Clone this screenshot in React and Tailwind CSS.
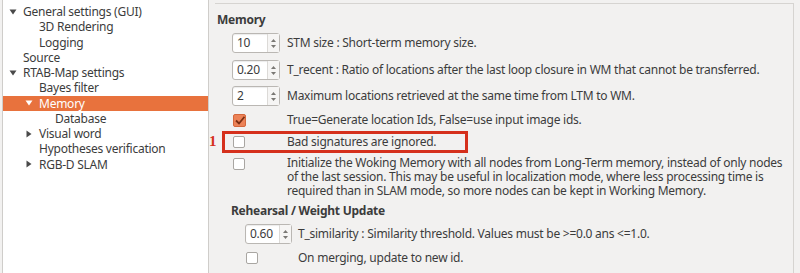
const tree = [
  { label: "General settings (GUI)", level: 0, arrow: "down" },
  { label: "3D Rendering", level: 1 },
  { label: "Logging", level: 1 },
  { label: "Source", level: 0 },
  { label: "RTAB-Map settings", level: 0, arrow: "down" },
  { label: "Bayes filter", level: 1 },
  { label: "Memory", level: 1, arrow: "down", selected: true },
  { label: "Database", level: 2 },
  { label: "Visual word", level: 1, arrow: "right" },
  { label: "Hypotheses verification", level: 1 },
  { label: "RGB-D SLAM", level: 1, arrow: "right" },
];

function Arrow({ dir, light }) {
  const color = light ? "#ffffff" : "#4a4a4a";
  return dir === "down" ? (
    <svg width="8" height="8" viewBox="0 0 8 8">
      <path d="M0.5 1.5 L7.5 1.5 L4 6.5 Z" fill={color} />
    </svg>
  ) : (
    <svg width="8" height="8" viewBox="0 0 8 8">
      <path d="M1.5 0.5 L6.5 4 L1.5 7.5 Z" fill={color} />
    </svg>
  );
}

function SpinBox({ value, width = "w-[48px]" }) {
  return (
    <div className={`${width} h-[20px] flex bg-white border border-[#bab7b3] rounded-[3px] shadow-[inset_0_1px_1px_rgba(0,0,0,0.08)]`}>
      <div className="flex-1 pl-[4px] leading-[18px]">{value}</div>
      <div className="w-[12px] flex flex-col items-center justify-center gap-[3px] border-l border-[#dcdad7] bg-[#f6f5f4]">
        <svg width="5" height="3" viewBox="0 0 5 3">
          <path d="M0 3 L2.5 0 L5 3 Z" fill="#7a7874" />
        </svg>
        <svg width="5" height="3" viewBox="0 0 5 3">
          <path d="M0 0 L2.5 3 L5 0 Z" fill="#7a7874" />
        </svg>
      </div>
    </div>
  );
}

function CheckBox({ checked }) {
  return checked ? (
    <div className="w-[13px] h-[13px] rounded-[2px] bg-[#ec8257] border border-[#d4673c] flex items-center justify-center">
      <svg width="10" height="9" viewBox="0 0 10 9">
        <path d="M1 4.5 L4 7.5 L9.5 0.8" stroke="#7a2e12" strokeWidth="1.8" fill="none" />
      </svg>
    </div>
  ) : (
    <div className="w-[12px] h-[12px] rounded-[2px] bg-white border border-[#a9a6a2]" />
  );
}

export default function App() {
  return (
    <div
      className="w-[800px] h-[273px] bg-[#f2f1f0] flex text-[12px] tracking-[-0.25px] text-[#3c3c3c] overflow-hidden relative"
      style={{ fontFamily: '"Noto Sans", "Open Sans", sans-serif' }}
    >
      {/* tree */}
      <div className="ml-[2px] w-[207px] h-full bg-white border-l border-r border-[#cfcdca] pt-[4px]">
        {tree.map((t) => (
          <div
            key={t.label}
            className={`h-[15.25px] flex items-center whitespace-nowrap ${t.selected ? "bg-[#e8723d] text-white" : ""}`}
          >
            <div
              className="flex items-center"
              style={{ paddingLeft: 6 + t.level * 16 }}
            >
              <div className="w-[14px] flex items-center">
                {t.arrow && <Arrow dir={t.arrow} light={t.selected} />}
              </div>
              <span className="leading-[13px]">{t.label}</span>
            </div>
          </div>
        ))}
      </div>

      {/* settings panel */}
      <div className="ml-[6px] mt-[3px] w-[579px] h-[280px] border-t border-r border-[#d6d4d1] pl-[2px]">
        <div className="font-bold leading-[16px] mt-[8px]">Memory</div>
        <div className="pl-[15px] whitespace-nowrap">
          <div className="flex items-center mt-[5px]">
            <div className="w-[55px]"><SpinBox value="10" /></div>
            <span>STM size : Short-term memory size.</span>
          </div>
          <div className="flex items-center mt-[7px]">
            <div className="w-[55px]"><SpinBox value="0.20" /></div>
            <span>T_recent : Ratio of locations after the last loop closure in WM that cannot be transferred.</span>
          </div>
          <div className="flex items-center mt-[6px]">
            <div className="w-[55px]"><SpinBox value="2" /></div>
            <span>Maximum locations retrieved at the same time from LTM to WM.</span>
          </div>
          <div className="flex items-center mt-[7px] h-[14px]">
            <div className="w-[55px] pl-[1px]"><CheckBox checked /></div>
            <span>True=Generate location Ids, False=use input image ids.</span>
          </div>
          <div className="flex items-center mt-[8px] h-[14px]">
            <div className="w-[55px] pl-[1px]"><CheckBox /></div>
            <span>Bad signatures are ignored.</span>
          </div>
          <div className="flex items-start mt-[7px]">
            <div className="w-[55px] pl-[1px] pt-[2px]"><CheckBox /></div>
            <span className="leading-[14px] w-[498px] whitespace-normal">
              Initialize the Woking Memory with all nodes from Long-Term memory, instead of only nodes of the last session. This may be useful in localization mode, where less processing time is required than in SLAM mode, so more nodes can be kept in Working Memory.
            </span>
          </div>
        </div>
        <div className="pl-[14px] whitespace-nowrap">
          <div className="font-bold leading-[16px] mt-[5px]">Rehearsal / Weight Update</div>
          <div className="pl-[14px]">
            <div className="flex items-center mt-[5px]">
              <div className="w-[53px]"><SpinBox value="0.60" width="w-[47px]" /></div>
              <span>T_similarity : Similarity threshold. Values must be &gt;=0.0 ans &lt;=1.0.</span>
            </div>
            <div className="flex items-center mt-[7px] h-[14px]">
              <div className="w-[53px] pl-[1px]"><CheckBox /></div>
              <span>On merging, update to new id.</span>
            </div>
          </div>
        </div>
      </div>

      {/* annotation */}
      <div className="absolute left-[222px] top-[131px] w-[246px] h-[22px] border-[3px] border-[#d5301c]" />
      <div
        className="absolute left-[209px] top-[132px] text-[15px] font-bold text-[#d5301c] leading-[18px]"
        style={{ fontFamily: '"Liberation Serif", serif' }}
      >
        1
      </div>
    </div>
  );
}
